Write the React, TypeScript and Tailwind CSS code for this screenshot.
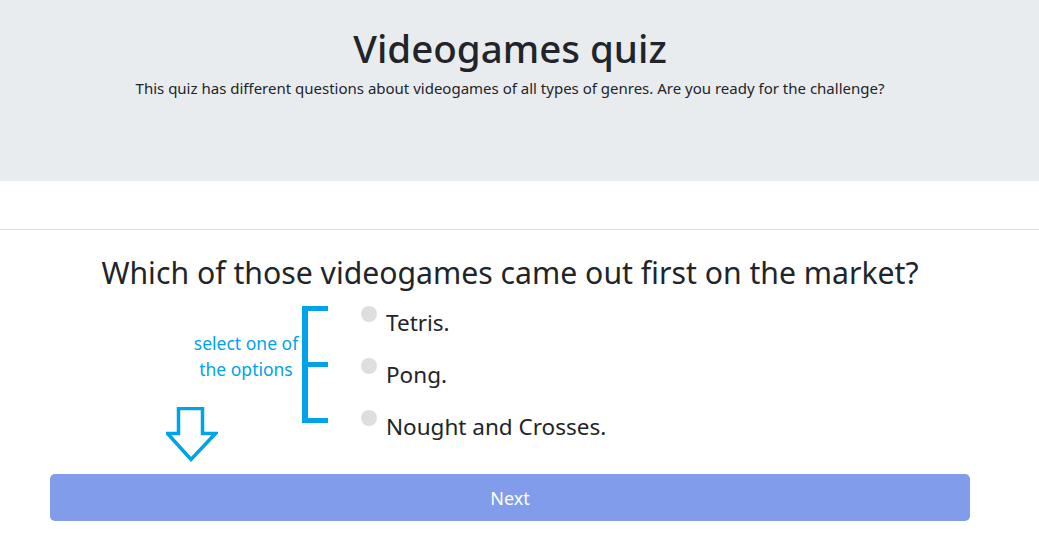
const options = ["Tetris.", "Pong.", "Nought and Crosses."];

function DownArrow() {
  return (
    <svg width="52" height="56" viewBox="0 0 52 56" fill="none">
      <path
        d="M12.5 1.5 H36.5 V26.5 H49.5 L25 52.5 L1.5 26.5 H12.5 Z"
        stroke="#00a2e8"
        strokeWidth="3.5"
        strokeLinejoin="miter"
        fill="white"
      />
    </svg>
  );
}

function Bracket() {
  return (
    <div className="flex h-[117px] w-[26px] flex-col justify-between border-l-[6px] border-[#00a2e8]">
      <div className="h-[5px] w-full bg-[#00a2e8]" />
      <div className="h-[5px] w-full bg-[#00a2e8]" />
      <div className="h-[5px] w-full bg-[#00a2e8]" />
    </div>
  );
}

export default function App() {
  return (
    <div className="min-h-[540px] bg-white font-['Noto_Sans',sans-serif] text-[#212529]">
      <header className="h-[181px] bg-[#e9ecef]">
        <div className="w-[1020px] pt-[22px] text-center">
          <h1 className="text-[38.5px] font-medium leading-[52px]">Videogames quiz</h1>
          <p className="mt-[3px] text-[15px] leading-[22px]">
            This quiz has different questions about videogames of all types of genres. Are you ready for the challenge?
          </p>
        </div>
      </header>

      <div className="h-[48px]" />
      <hr className="border-t border-[#dcdcdc]" />

      <main className="relative w-[1020px]">
        <h2 className="pt-[22px] text-center text-[30.2px] leading-[42px]">
          Which of those videogames came out first on the market?
        </h2>

        <div className="mt-[12px] flex items-start">
          <div className="ml-[192px] mt-[24px] w-[108px] text-center text-[17.5px] leading-[26px] text-[#00a2e8]">
            select one of
            <br />
            the options
          </div>
          <div className="ml-[2px]">
            <Bracket />
          </div>
          <ul className="ml-[33px] flex flex-col gap-[20px]">
            {options.map((o) => (
              <li key={o} className="flex items-start gap-[9px]">
                <span className="h-4 w-4 shrink-0 rounded-full bg-[#dedede]" />
                <span className="mt-[2px] text-[22.5px] leading-[30px]">{o}</span>
              </li>
            ))}
          </ul>
        </div>

        <div className="absolute left-[166px] top-[177px]">
          <DownArrow />
        </div>

        <div className="px-[50px] pt-[32px]">
          <button className="h-[47px] w-full rounded-[5px] bg-[#829cec] pt-[2px] text-[18px] text-white">
            Next
          </button>
        </div>
      </main>
    </div>
  );
}
